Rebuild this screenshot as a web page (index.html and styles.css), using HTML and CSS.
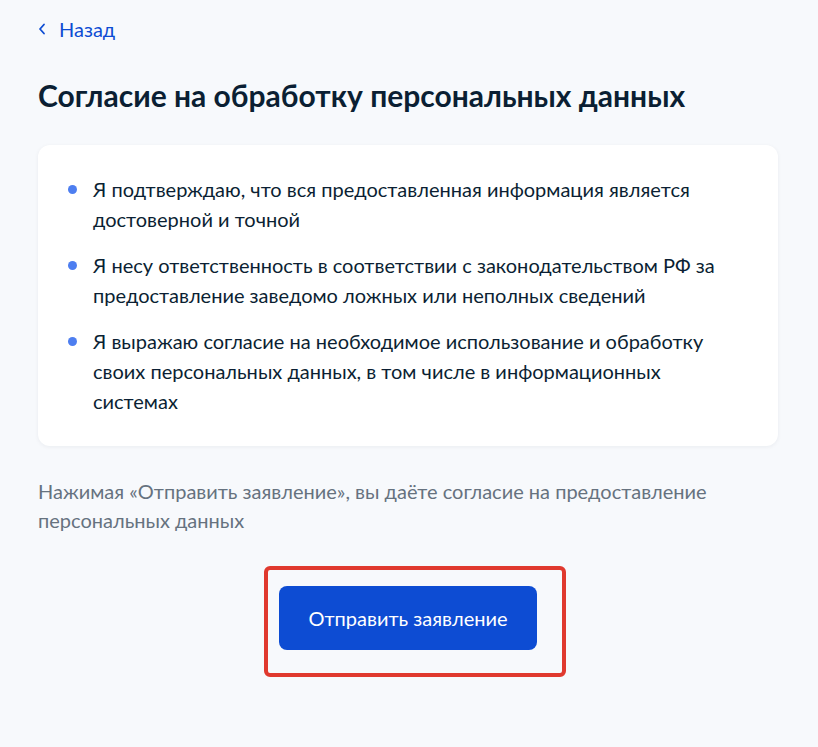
FILE: index.html
```html
<!DOCTYPE html>
<html lang="ru">
<head>
<meta charset="utf-8">
<link rel="stylesheet" href="styles.css">
</head>
<body>
<div class="page">
  <a class="back" href="#">
    <svg class="chev" width="8" height="12" viewBox="0 0 8 12"><path d="M6 1.5 L2 6 L6 10.5" fill="none" stroke="#0d4cd3" stroke-width="1.8" stroke-linecap="round" stroke-linejoin="round"/></svg>
    <span>Назад</span>
  </a>
  <h1 class="title">Согласие на обработку персональных данных</h1>
  <div class="card">
    <ul class="list">
      <li>Я подтверждаю, что вся предоставленная информация является достоверной и точной</li>
      <li>Я несу ответственность в соответствии с законодательством РФ за предоставление заведомо ложных или неполных сведений</li>
      <li>Я выражаю согласие на необходимое использование и обработку своих персональных данных, в том числе в информационных системах</li>
    </ul>
  </div>
  <p class="note">Нажимая «Отправить заявление», вы даёте согласие на предоставление персональных данных</p>
  <div class="actions">
    <div class="highlight">
      <button class="btn">Отправить заявление</button>
    </div>
  </div>
</div>
</body>
</html>
```
FILE: styles.css
```css
* { box-sizing: border-box; }
html, body { margin: 0; padding: 0; }
body {
  background: #f7f9fc;
  font-family: Lato, "Noto Sans", sans-serif;
  color: #0b1f33;
}
.page {
  padding: 17px 40px 0 38px;
}
.back {
  display: inline-flex;
  align-items: center;
  gap: 13px;
  color: #0d4cd3;
  text-decoration: none;
  font-size: 20px;
  line-height: 24px;
}
.title {
  margin: 36px 0 0 0;
  font-size: 30px;
  line-height: 36px;
  font-weight: 700;
  color: #0b1f33;
}
.card {
  margin-top: 32px;
  background: #fff;
  border-radius: 12px;
  box-shadow: 0 1px 4px rgba(11, 31, 51, 0.06);
  padding: 29px 30px 30px 30px;
}
.list {
  list-style: none;
  margin: 0;
  padding: 0;
  display: flex;
  flex-direction: column;
  gap: 16px;
}
.list li {
  position: relative;
  padding-left: 25px;
  font-size: 20px;
  line-height: 30px;
  color: #0b1f33;
}
.list li::before {
  content: "";
  position: absolute;
  left: 0;
  top: 11px;
  width: 9px;
  height: 9px;
  border-radius: 50%;
  background: #4d7ef0;
}
.note {
  margin: 31px 0 0 0;
  font-size: 20px;
  line-height: 29px;
  color: #66727f;
}
.actions {
  display: flex;
  justify-content: center;
  margin-top: 31px;
  padding-left: 14px;
}
.highlight {
  border: 4px solid #e0392e;
  border-radius: 6px;
  padding: 16px 25px 23px 11px;
}
.btn {
  display: block;
  background: #0d4cd3;
  color: #fff;
  border: none;
  border-radius: 8px;
  width: 258px;
  height: 64px;
  font-family: Lato, "Noto Sans", sans-serif;
  font-size: 20px;
  cursor: pointer;
}
```
